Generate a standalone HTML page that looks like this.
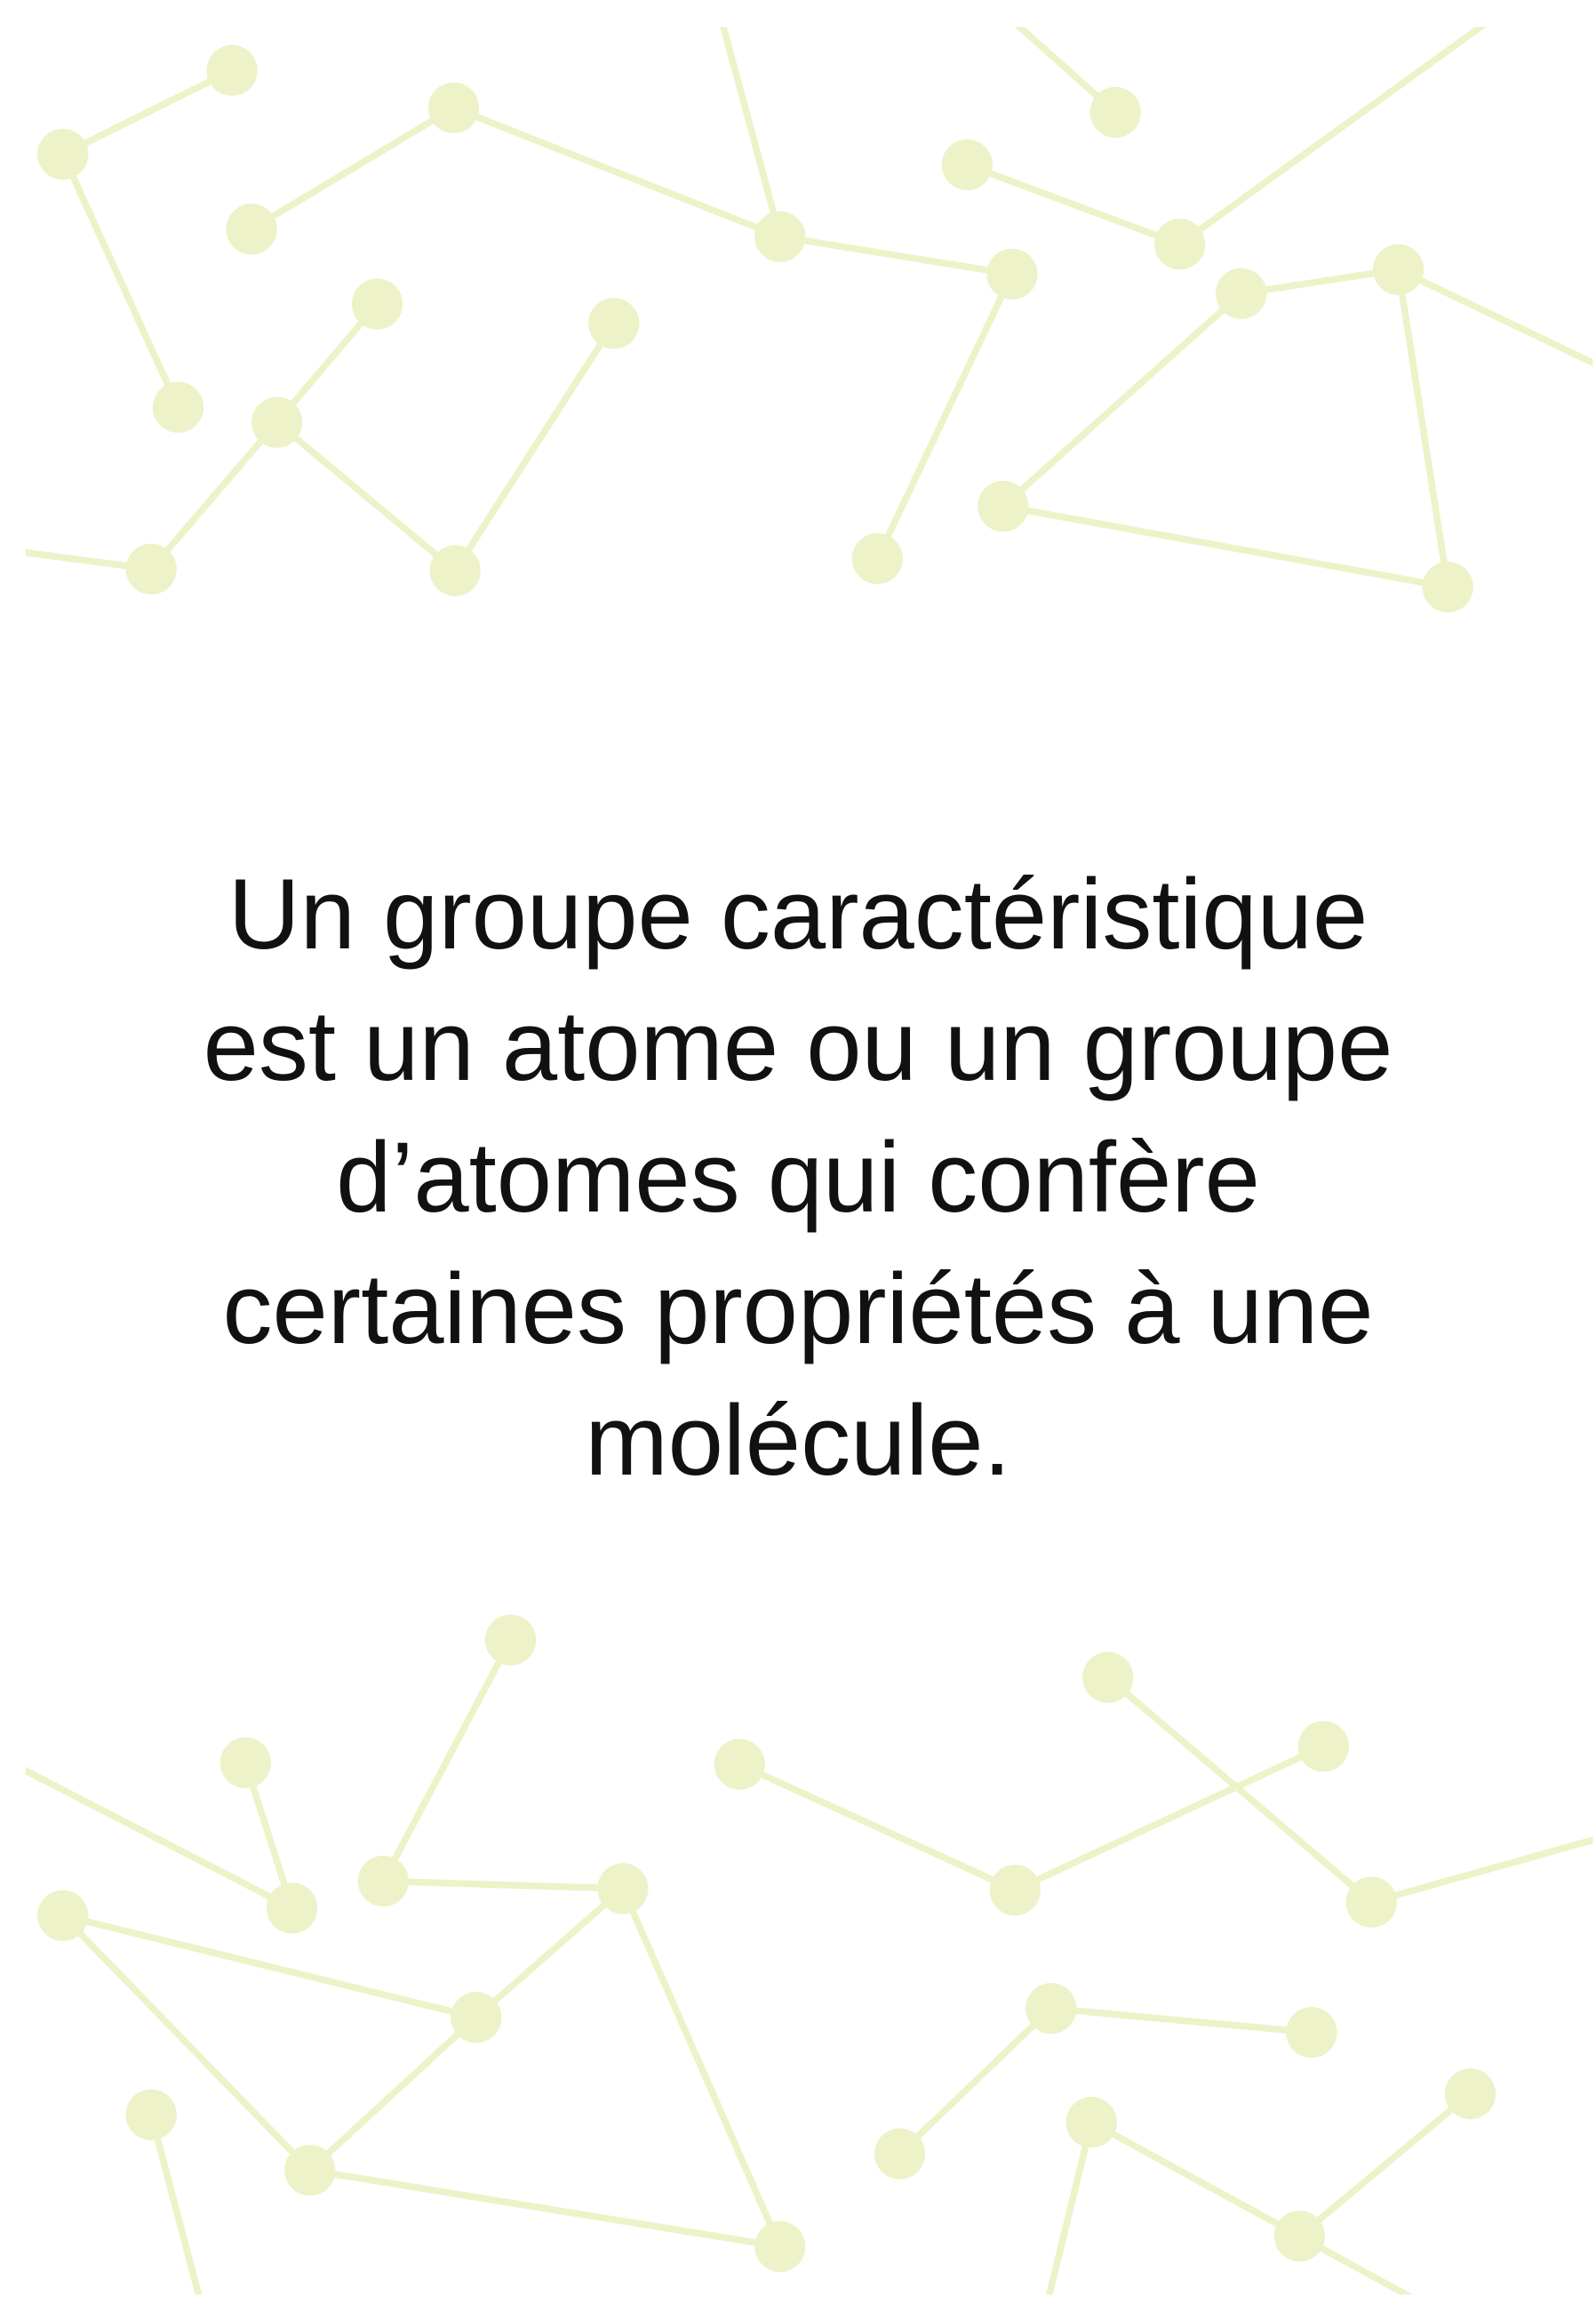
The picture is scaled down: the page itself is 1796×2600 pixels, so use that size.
<!DOCTYPE html>
<html><head><meta charset="utf-8"><style>
html,body{margin:0;padding:0;background:#fff;width:1796px;height:2600px;overflow:hidden;position:relative}
svg{position:absolute;left:0;top:0}
.t{position:absolute;left:0;top:955px;width:1796px;text-align:center;font-family:"Liberation Sans",sans-serif;font-size:112px;line-height:148px;color:#111}
</style></head><body>
<svg width="1796" height="2600" viewBox="0 0 1066 1543" preserveAspectRatio="none">
<defs><clipPath id="c"><rect x="17" y="18" width="1047" height="1514"/></clipPath></defs>
<g clip-path="url(#c)" stroke="#eef2c8" stroke-width="4.5" fill="#eef2c8">
<line x1="42" y1="103" x2="155" y2="47"/><line x1="42" y1="103" x2="119" y2="272"/>
<line x1="168" y1="153" x2="303" y2="72"/><line x1="303" y1="72" x2="521" y2="158"/>
<line x1="521" y1="158" x2="481" y2="10"/><line x1="521" y1="158" x2="676" y2="183"/>
<line x1="676" y1="183" x2="586" y2="373"/><line x1="252" y1="203" x2="185" y2="282"/>
<line x1="185" y1="282" x2="101" y2="380"/><line x1="101" y1="380" x2="10" y2="368"/>
<line x1="185" y1="282" x2="304" y2="381"/><line x1="304" y1="381" x2="410" y2="216"/>
<line x1="646" y1="110" x2="788" y2="163"/><line x1="788" y1="163" x2="1000" y2="10"/>
<line x1="745" y1="75" x2="672" y2="10"/><line x1="829" y1="196" x2="934" y2="180"/>
<line x1="934" y1="180" x2="1080" y2="250"/><line x1="934" y1="180" x2="967" y2="392"/>
<line x1="829" y1="196" x2="670" y2="338"/><line x1="670" y1="338" x2="967" y2="392"/>
<line x1="341" y1="1095" x2="256" y2="1256"/><line x1="164" y1="1177" x2="195" y2="1274"/>
<line x1="5" y1="1176" x2="195" y2="1274"/><line x1="256" y1="1256" x2="416" y2="1261"/>
<line x1="42" y1="1279" x2="318" y2="1347"/><line x1="318" y1="1347" x2="416" y2="1261"/>
<line x1="416" y1="1261" x2="521" y2="1500"/><line x1="42" y1="1279" x2="207" y2="1449"/>
<line x1="318" y1="1347" x2="207" y2="1449"/><line x1="207" y1="1449" x2="521" y2="1500"/>
<line x1="101" y1="1412" x2="140" y2="1560"/><line x1="494" y1="1178" x2="678" y2="1262"/>
<line x1="678" y1="1262" x2="884" y2="1166"/><line x1="740" y1="1120" x2="916" y2="1270"/>
<line x1="916" y1="1270" x2="1080" y2="1224"/><line x1="702" y1="1341" x2="876" y2="1357"/>
<line x1="702" y1="1341" x2="601" y2="1438"/><line x1="729" y1="1417" x2="694" y2="1560"/>
<line x1="729" y1="1417" x2="868" y2="1493"/><line x1="868" y1="1493" x2="982" y2="1398"/>
<line x1="868" y1="1493" x2="990" y2="1560"/>
<g stroke="none">
<circle cx="42" cy="103" r="17"/><circle cx="155" cy="47" r="17"/><circle cx="119" cy="272" r="17"/>
<circle cx="303" cy="72" r="17"/><circle cx="168" cy="153" r="17"/><circle cx="521" cy="158" r="17"/>
<circle cx="676" cy="183" r="17"/><circle cx="586" cy="373" r="17"/><circle cx="252" cy="203" r="17"/>
<circle cx="185" cy="282" r="17"/><circle cx="101" cy="380" r="17"/><circle cx="304" cy="381" r="17"/>
<circle cx="410" cy="216" r="17"/><circle cx="646" cy="110" r="17"/><circle cx="788" cy="163" r="17"/>
<circle cx="745" cy="75" r="17"/><circle cx="829" cy="196" r="17"/><circle cx="934" cy="180" r="17"/>
<circle cx="670" cy="338" r="17"/><circle cx="967" cy="392" r="17"/>
<circle cx="341" cy="1095" r="17"/><circle cx="164" cy="1177" r="17"/><circle cx="195" cy="1274" r="17"/>
<circle cx="256" cy="1256" r="17"/><circle cx="416" cy="1261" r="17"/><circle cx="42" cy="1279" r="17"/>
<circle cx="318" cy="1347" r="17"/><circle cx="207" cy="1449" r="17"/><circle cx="521" cy="1500" r="17"/>
<circle cx="101" cy="1412" r="17"/><circle cx="494" cy="1178" r="17"/><circle cx="678" cy="1262" r="17"/>
<circle cx="740" cy="1120" r="17"/><circle cx="884" cy="1166" r="17"/><circle cx="916" cy="1270" r="17"/>
<circle cx="702" cy="1341" r="17"/><circle cx="876" cy="1357" r="17"/><circle cx="601" cy="1438" r="17"/>
<circle cx="729" cy="1417" r="17"/><circle cx="868" cy="1493" r="17"/><circle cx="982" cy="1398" r="17"/>
</g></g></svg>
<div class="t">Un groupe caractéristique<br>est un atome ou un groupe<br>d’atomes qui confère<br>certaines propriétés à une<br>molécule.</div>
</body></html>
